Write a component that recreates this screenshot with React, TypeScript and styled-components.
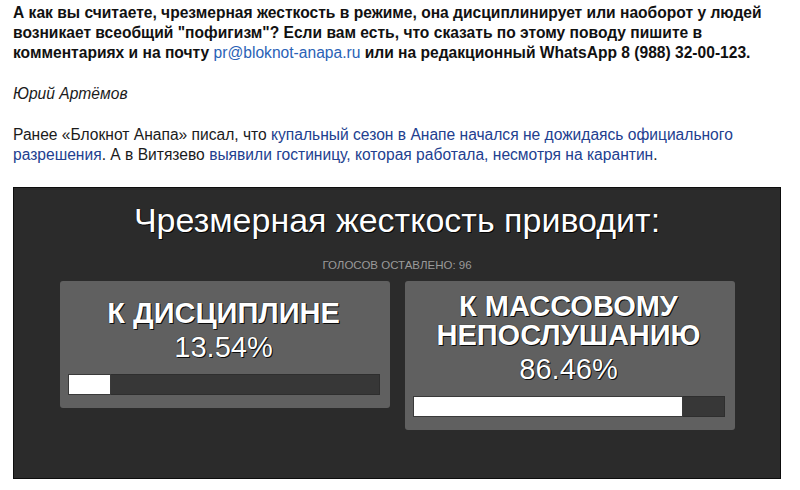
import styled, { createGlobalStyle } from "styled-components";

type PollOption = {
  id: string;
  lines: string[];
  percent: number;
};

const options: PollOption[] = [
  { id: "discipline", lines: ["К ДИСЦИПЛИНЕ"], percent: 13.54 },
  { id: "disobedience", lines: ["К МАССОВОМУ", "НЕПОСЛУШАНИЮ"], percent: 86.46 },
];

const GlobalStyle = createGlobalStyle`
  body {
    margin: 0;
    background: #ffffff;
    font-family: "Liberation Sans", Arial, Helvetica, sans-serif;
  }
`;

const App = () => {
  return (
    <>
      <GlobalStyle />
      <Page>
        <Lead>
          А как вы считаете, чрезмерная жесткость в режиме, она дисциплинирует
          или наоборот у людей возникает всеобщий "пофигизм"? Если вам есть, что
          сказать по этому поводу пишите в комментариях и на почту{" "}
          <MailLink href="#">pr@bloknot-anapa.ru</MailLink> или на редакционный
          WhatsApp 8 (988) 32-00-123.
        </Lead>

        <Author>Юрий Артёмов</Author>

        <Text>
          Ранее «Блокнот Анапа» писал, что{" "}
          <NewsLink href="#">
            купальный сезон в Анапе начался не дожидаясь официального
            разрешения
          </NewsLink>
          . А в Витязево{" "}
          <NewsLink href="#">
            выявили гостиницу, которая работала, несмотря на карантин
          </NewsLink>
          .
        </Text>

        <Poll>
          <PollTitle>Чрезмерная жесткость приводит:</PollTitle>
          <PollCount>Голосов оставлено: 96</PollCount>

          <OptionList>
            {options.map((option) => (
              <OptionCard key={option.id} $single={option.lines.length === 1}>
                <OptionLabel>
                  {option.lines.map((line) => (
                    <span key={line}>{line}</span>
                  ))}
                </OptionLabel>
                <OptionPercent>{option.percent.toFixed(2)}%</OptionPercent>
                <Bar>
                  <BarFill style={{ width: `${option.percent}%` }} />
                </Bar>
              </OptionCard>
            ))}
          </OptionList>
        </Poll>
      </Page>
    </>
  );
};

const Page = styled.div`
  display: flex;
  flex-direction: column;
  gap: 21px;
  width: 768px;
  padding: 3px 19px 0 13px;
  font-size: 15.6px;
  line-height: 20px;
  color: #1b1b1b;
`;

const Lead = styled.p`
  margin: 0;
  font-weight: 700;
  color: #111111;
`;

const MailLink = styled.a`
  font-weight: 400;
  color: #2a62b6;
  text-decoration: none;
`;

const Author = styled.p`
  margin: 0;
  font-style: italic;
`;

const Text = styled.p`
  margin: 0;
`;

const NewsLink = styled.a`
  color: #22408f;
  text-decoration: none;
`;

const Poll = styled.section`
  margin-top: 1px;
  display: flex;
  flex-direction: column;
  align-items: center;
  height: 292px;
  box-sizing: border-box;
  padding-top: 13px;
  background: #2b2b2b;
  border: 1px solid #0d0d0d;
  color: #ffffff;
  text-shadow: 1px 1px 0 rgba(0, 0, 0, 0.85), 0 0 1px #000;
`;

const PollTitle = styled.h2`
  margin: 0;
  font-size: 34px;
  line-height: 38px;
  font-weight: 400;
`;

const PollCount = styled.div`
  margin-top: 19px;
  font-size: 11.5px;
  line-height: 14px;
  text-transform: uppercase;
  color: #9a9a9a;
  text-shadow: none;
`;

const OptionList = styled.div`
  display: flex;
  align-items: flex-start;
  gap: 15px;
  margin-top: 9px;
`;

const OptionCard = styled.div<{ $single: boolean }>`
  display: flex;
  flex-direction: column;
  align-items: center;
  width: 330px;
  box-sizing: border-box;
  padding: ${({ $single }) => ($single ? "18px" : "11px")} 10px 13px 8px;
  background: #606060;
  border-radius: 3px;
`;

const OptionLabel = styled.div`
  display: flex;
  flex-direction: column;
  align-items: center;
  font-size: 29px;
  line-height: 29px;
  font-weight: 700;
`;

const OptionPercent = styled.div`
  margin-top: 2px;
  font-size: 29px;
  line-height: 34px;
`;

const Bar = styled.div`
  align-self: stretch;
  margin-top: 10px;
  height: 21px;
  box-sizing: border-box;
  background: #373737;
  border: 1px solid #2e2e2e;
`;

const BarFill = styled.div`
  height: 100%;
  background: #ffffff;
  box-shadow: 0 0 0 1px #3a3a3a;
`;

export default App;
